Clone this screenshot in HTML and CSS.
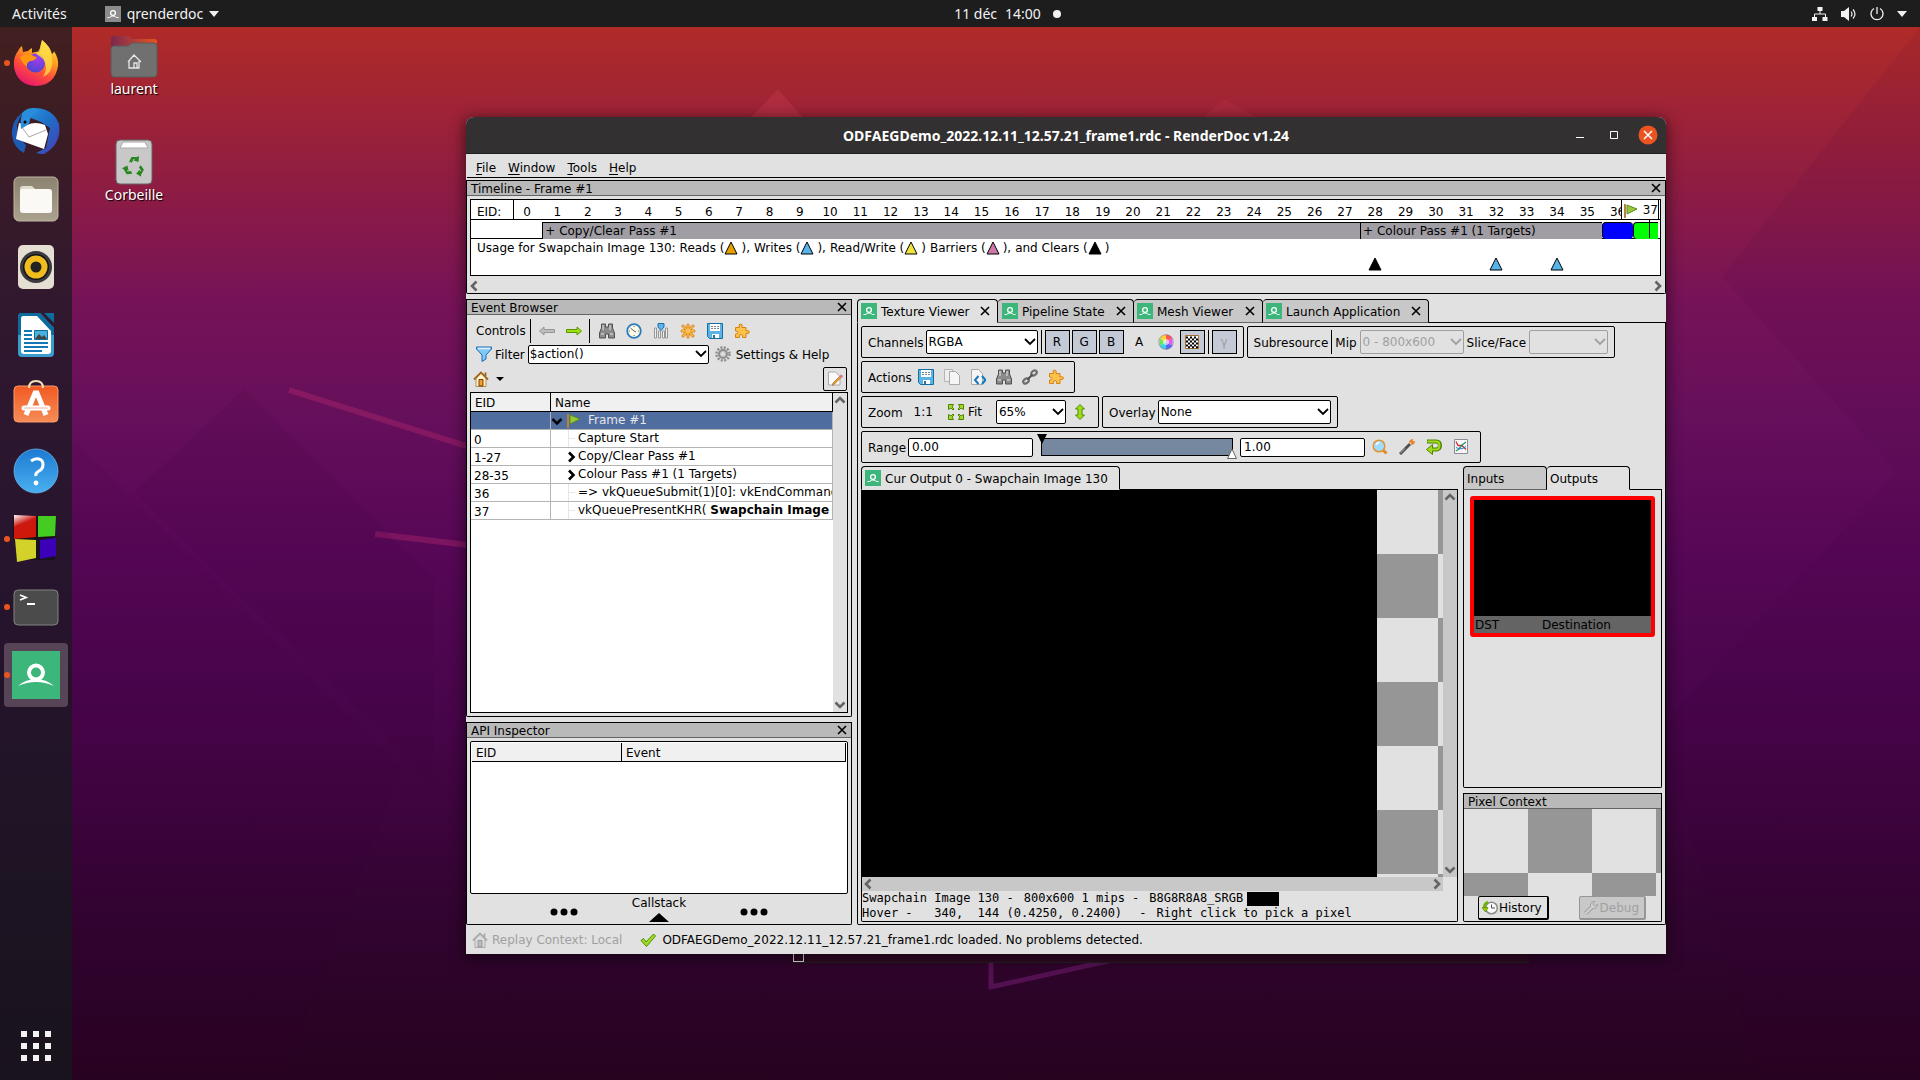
FILE: index.html
```html
<!DOCTYPE html>
<html lang="fr">
<head>
<meta charset="utf-8">
<title>qrenderdoc</title>
<link rel="stylesheet" href="styles.css">
</head>
<body>
<svg class="defs" aria-hidden="true">
  <defs>
    <linearGradient id="g-fire" x1="0.8" y1="0" x2="0.3" y2="1"><stop offset="0" stop-color="#fff44f"/><stop offset=".35" stop-color="#ffa01e"/><stop offset=".65" stop-color="#ff4f3a"/><stop offset="1" stop-color="#e6146e"/></linearGradient>
    <radialGradient id="g-globe" cx=".6" cy=".3" r=".8"><stop offset="0" stop-color="#a03cf0"/><stop offset="1" stop-color="#4646c8"/></radialGradient>
    <linearGradient id="g-bird" x1="0" y1="0" x2="1" y2="1"><stop offset="0" stop-color="#2a9be0"/><stop offset=".5" stop-color="#1e6ec8"/><stop offset="1" stop-color="#4a3ab4"/></linearGradient>
    <linearGradient id="g-blue" x1="0" y1="0" x2="0" y2="1"><stop offset="0" stop-color="#1c7ad2"/><stop offset="1" stop-color="#4ab0f0"/></linearGradient>
    <linearGradient id="g-orange" x1="0" y1="0" x2="0" y2="1"><stop offset="0" stop-color="#f25a22"/><stop offset="1" stop-color="#f58c58"/></linearGradient>
    <linearGradient id="g-tan" x1="0" y1="0" x2="0" y2="1"><stop offset="0" stop-color="#8c8270"/><stop offset="1" stop-color="#aaa28e"/></linearGradient>
    <linearGradient id="g-folder" x1="0" y1="0" x2="1" y2="0"><stop offset="0" stop-color="#7a2850"/><stop offset="1" stop-color="#e95420"/></linearGradient>
    <linearGradient id="g-red" x1="0" y1="0" x2=".4" y2="1"><stop offset="0" stop-color="#fff"/><stop offset=".45" stop-color="#cc1810"/><stop offset="1" stop-color="#d01808"/></linearGradient>
  </defs>
  <symbol id="rd" viewBox="0 0 48 48"><path fill="#3cb67a" d="M0 0h48v48H0z"/><circle cx="24" cy="21.500" r="7" fill="none" stroke="#fff" stroke-width="4"/><path fill="#fff" d="M6 35Q14 28 24 28t18 7Q33 31 24 31T6 35z"/></symbol>
  <symbol id="rd-small" viewBox="0 0 16 16"><path fill="#3cb67a" d="M0 0h16v16H0z"/><circle cx="8" cy="7" r="2.400" fill="none" stroke="#fff" stroke-width="1.300"/><path d="M2.500 11.500h2Q6 10 8 10t3.500 1.500h2" fill="none" stroke="#fff"/></symbol>
  <symbol id="flag" viewBox="0 0 16 16"><path d="M2 1v14" stroke="#b8823c" stroke-width="2"/><path d="M4 2l10 4-10 5z" fill="#9ac83c" stroke="#5a8c1e"/></symbol>
  <symbol id="close" viewBox="0 0 10 10"><path d="M1 1l8 8M9 1L1 9" stroke="#000" stroke-width="1.600"/></symbol>
  <symbol id="back" viewBox="0 0 16 16"><path d="M.500 8L5 4v2.500h10.500v3H5V12z" fill="#bebebe" stroke="#969696"/></symbol>
  <symbol id="forward" viewBox="0 0 16 16"><path d="M15.500 8L11 4v2.500H.500v3H11V12z" fill="#9ae010" stroke="#5a9600"/></symbol>
  <symbol id="binoculars" viewBox="0 0 16 16"><path d="M2.500 1h4v3h3V1h4v4l2 5v5H9.500v-4h-3v4H.500v-5l2-5z" fill="#8c8c8c" stroke="#505050"/><path d="M2 11h3M11 11h3M4 2v5M11 2v5" stroke="#e6e6e6"/></symbol>
  <symbol id="clock" viewBox="0 0 16 16"><circle cx="8" cy="8" r="6.800" fill="#fffbe6" stroke="#287cbe" stroke-width="1.800"/><path d="M8 8L4.500 5M8 3v1M8 12v1M3 8h1M12 8h1M8 8l2 1" stroke="#506478"/></symbol>
  <symbol id="bars" viewBox="0 0 16 16"><path d="M1.500 5v10h2V5zM5.500 8v7h2V8zM9.500 8v7h2V8zM12.500 5v10h2V5z" fill="#eee" stroke="#969696"/><path d="M5 .500h6V4L8 7.500 5 4z" fill="#5ab4f0" stroke="#1e6ea0"/></symbol>
  <symbol id="asterisk" viewBox="0 0 16 16"><g stroke-linecap="round"><path d="M8 2v12M2 8h12M3 3l10 10M13 3L3 13" stroke="#d88214" stroke-width="3"/><path d="M8 2v12M2 8h12M3 3l10 10M13 3L3 13" stroke="#ffc050" stroke-width="1.300"/></g></symbol>
  <symbol id="save" viewBox="0 0 16 16"><path d="M.500.500h15v15h-13l-2-2z" fill="#5ab4e6" stroke="#146ea0"/><path d="M3 1h10v7H3zM5 11h7v4H5z" fill="#fff"/><path d="M4 3.500h8M4 5.500h8" stroke="#82828c" stroke-dasharray="2 1"/><path d="M6 12h2v3H6z" fill="#3c6e96"/></symbol>
  <symbol id="puzzle" viewBox="0 0 16 16"><path d="M1.500 4.500h4Q4 1 6.500 1T8 4.500h4V8q3.500-1 3.500 1T12 10.500v4H8.500q1-3-1.500-3t-1.500 3h-4V11Q4 11 4 9.500T1.500 8z" fill="#fcc24a" stroke="#d88214"/></symbol>
  <symbol id="funnel" viewBox="0 0 16 16"><path d="M.500 1h15v2L10 9v4l-4 2.500V9L.500 3z" fill="#82c8f5" stroke="#1e6eb4"/><path d="M2 2.500h12" stroke="#dff2ff" stroke-width="1.500"/></symbol>
  <symbol id="gear" viewBox="0 0 16 16"><circle cx="8" cy="8" r="6.500" fill="none" stroke="#8c8c8c" stroke-width="2.500" stroke-dasharray="2 1.400"/><circle cx="8" cy="8" r="4" fill="#c8c8c8" stroke="#8c8c8c" stroke-width="2"/><circle cx="8" cy="8" r="1.800" fill="#e1e1e1"/></symbol>
  <symbol id="house" viewBox="0 0 16 16"><path d="M3 7l5-5 5 5v8.500H3z" fill="#fff4d2" stroke="#b48c50"/><path d="M1 8.500L8 1.500l7 7M12.500 5V1.500" fill="none" stroke="#a0641e" stroke-width="1.800"/><path d="M6 8.500h4v6.500H6z" fill="#f0a028" stroke="#783c0a"/></symbol>
  <symbol id="house-grey" viewBox="0 0 16 16"><path d="M3 7l5-5 5 5v8.500H3z" fill="#ddd" stroke="#aaa"/><path d="M1 8.500L8 1.500l7 7M12.500 5V1.500" fill="none" stroke="#aaa" stroke-width="1.800"/><path d="M6 8.500h4v6.500H6z" fill="#bbb" stroke="#999"/></symbol>
  <symbol id="edit" viewBox="0 0 16 16"><path d="M1.500 1h7L13 5.500V14H1.500z" fill="#fafafa" stroke="#aaa"/><path d="M14.500 6l-7 7-2 1.500.500-2.500 7-7z" fill="#f5a028" stroke="#96641e" stroke-width=".7"/><path d="M13 4.500l2.500 1.500" stroke="#d278a0" stroke-width="2.500"/></symbol>
  <symbol id="wheel" viewBox="0 0 16 16"><g transform="translate(8 8)"><path fill="#f55" d="M0 0V-7.500A7.500 7.500 0 0 1 6.500-3.750z"/><path fill="#e05af0" d="M0 0L6.500-3.750V3.750z"/><path fill="#5a64f5" d="M0 0L6.500 3.750A7.500 7.500 0 0 1 0 7.500z"/><path fill="#3cd2e6" d="M0 0V7.500A7.500 7.500 0 0 1-6.500 3.750z"/><path fill="#6ee650" d="M0 0L-6.500 3.750V-3.750z"/><path fill="#fad23c" d="M0 0L-6.500-3.750A7.500 7.500 0 0 1 0-7.500z"/><circle r="3" fill="#fff" opacity=".6"/><circle r="7.300" fill="none" stroke="#8c78a0" stroke-width=".6"/></g></symbol>
  <symbol id="checker" viewBox="0 0 16 16"><path d="M1.500 1.500h13v13h-13z" fill="#fff" stroke="#a06e32"/><path d="M2 3.500h12M2 7.500h12M2 11.500h12" stroke="#000" stroke-width="2" stroke-dasharray="2"/><path d="M4 5.500h10M4 9.500h10M4 13.200h10" stroke="#000" stroke-width="2" stroke-dasharray="2"/></symbol>
  <symbol id="copy" viewBox="0 0 16 16"><path d="M.500.500h8v12h-8z" fill="#eee" stroke="#b4b4b4"/><path d="M5.500 2.500h6l4 4v9h-10z" fill="#f5f5f5" stroke="#aaa"/></symbol>
  <symbol id="page-code" viewBox="0 0 16 16"><path d="M1.500.500h7l4 4v11h-11z" fill="#f5f5f5" stroke="#aaa"/><path d="M8.500 7L5 11l3.500 4M12 7l3.500 4-3.500 4" fill="none" stroke="#1478be" stroke-width="2"/></symbol>
  <symbol id="link" viewBox="0 0 16 16"><g fill="none" stroke="#6e6e6e" stroke-width="2.200"><ellipse cx="4" cy="12" rx="3" ry="2.200" transform="rotate(-40 4 12)"/><ellipse cx="12" cy="4" rx="3" ry="2.200" transform="rotate(-40 12 4)"/></g><path d="M5.500 10.500l5-5" stroke="#505050" stroke-width="2"/></symbol>
  <symbol id="fit" viewBox="0 0 16 16"><g fill="#a0dc28" stroke="#508200"><path d="M.500.500h5L4 3l2 2-1 1-2-2-2.500 1.500zM15.500.500h-5L12 3l-2 2 1 1 2-2 2.500 1.500zM.500 15.500h5L4 13l2-2-1-1-2 2-2.500-1.500zM15.500 15.500h-5L12 13l-2-2 1-1 2 2 2.500-1.500z"/></g></symbol>
  <symbol id="updown" viewBox="0 0 16 16"><path d="M8 .500L12.500 5H10v6h2.500L8 15.500 3.500 11H6V5H3.500z" fill="#a0dc1e" stroke="#508c00"/></symbol>
  <symbol id="magnifier" viewBox="0 0 16 16"><path d="M10.500 10.500l4 4" stroke="#e08c28" stroke-width="3"/><circle cx="7" cy="7" r="5.800" fill="#a0dcff" stroke="#e09632" stroke-width="1.500"/><path d="M4 6q1-2.500 3.500-2.500" stroke="#fff" stroke-width="1.500" fill="none"/></symbol>
  <symbol id="wand" viewBox="0 0 16 16"><path d="M1 15L11 5" stroke="#505050" stroke-width="3"/><path d="M1.500 14L6 9.500" stroke="#b4b4b4"/><path d="M13 0v6M10 3h6M11 1l4 4" stroke="#e6822d" stroke-width="1.500"/></symbol>
  <symbol id="undo" viewBox="0 0 16 16"><path d="M1 2.500h9.500Q14 3 14 6.500T10.500 10.500H4" fill="none" stroke="#508200" stroke-width="4"/><path d="M6.500 5.500v10L.500 10.500z" fill="#a0dc1e" stroke="#508200"/><path d="M1.500 2.500h9Q13.500 3 13.500 6.500T10.500 10.500H3" fill="none" stroke="#a0dc1e" stroke-width="2"/></symbol>
  <symbol id="graph" viewBox="0 0 16 16"><path d="M1.500.500h13v14h-13z" fill="#fff" stroke="#8c8c96"/><path d="M3 1v13M6 1v13M9 1v13M12 1v13" stroke="#dcdce6" stroke-width=".6"/><path d="M3 2.500l2 4h4l4 4" stroke="#c83232" fill="none" stroke-width="1.300"/><path d="M3 12l3-2 3-4 4-3" stroke="#28966e" fill="none" stroke-width="1.300"/><path d="M3 8.500q5 3 10-1" stroke="#2878c8" fill="none"/></symbol>
  <symbol id="history" viewBox="0 0 16 16"><circle cx="9.500" cy="8" r="5.800" fill="#fafafa" stroke="#8c8c8c" stroke-width="1.500"/><path d="M9.500 4.500V8H13" stroke="#505050" fill="none"/><path d="M6 2Q1.500 4 2.500 8" stroke="#6eb400" stroke-width="2.500" fill="none"/><path d="M0 7.500h6L3.500 12z" fill="#96d200" stroke="#508200" stroke-width=".7"/></symbol>
  <symbol id="wrench" viewBox="0 0 16 16"><path d="M2.500 13.500l7-7" stroke="#a0a0a0" stroke-width="4"/><path d="M14.500 4L12 6.500 9.500 4 12 1.500Q8 1 7.500 5T11 8.500t3.500-4.500z" fill="#d2d2d2" stroke="#a0a0a0"/><path d="M2.500 13.500l6-6" stroke="#d2d2d2" stroke-width="2"/></symbol>
  <symbol id="tick" viewBox="0 0 16 16"><path d="M1 8.500L3.500 6.500 6 10 13.500 2l2 2L6.500 14.500z" fill="#a0dc1e" stroke="#508c00"/></symbol>
  <symbol id="tri" viewBox="0 0 14 14"><path d="M7 1L13 13H1z"/></symbol>
  <symbol id="chev" viewBox="0 0 12 8"><path d="M1.500 6.500L6 2l4.500 4.500" fill="none" stroke="#646464" stroke-width="2.600"/></symbol>
  <symbol id="tree-open" viewBox="0 0 12 12"><path d="M1.500 4L6 8.500 10.500 4" fill="none" stroke="#000" stroke-width="2.600"/></symbol>
  <symbol id="tree-closed" viewBox="0 0 12 12"><path d="M4 1.500L8.500 6 4 10.500" fill="none" stroke="#000" stroke-width="2.600"/></symbol>
  <symbol id="dots" viewBox="0 0 28 8"><circle cx="4" cy="4" r="3.500"/><circle cx="14" cy="4" r="3.500"/><circle cx="24" cy="4" r="3.500"/></symbol>
</svg>

<header class="topbar">
  <div class="top-left">
    <button class="bare">Activités</button>
    <button class="bare app-menu">
      <svg width="16" height="16" viewBox="0 0 16 16"><path fill="#8c8c8c" d="M0 0h16v16H0z"/><circle cx="8" cy="7" r="2.400" fill="none" stroke="#fff" stroke-width="1.300"/><path d="M2.500 11.500h2Q6 10 8 10t3.500 1.500h2" fill="none" stroke="#fff"/></svg>
      <span>qrenderdoc</span>
      <svg width="10" height="6"><path d="M0 0h10L5 6z" fill="#f2f2f2"/></svg>
    </button>
  </div>
  <button class="bare clock"><span>11 déc</span><span>14:00</span><svg width="8" height="8"><circle cx="4" cy="4" r="4" fill="#f2f2f2"/></svg></button>
  <div class="tray">
    <svg width="16" height="14" viewBox="0 0 16 14"><path fill="#f2f2f2" d="M5.500 0h5v4h-5zM0 10h5v4H0zM10.500 10h5v4h-5z"/><path d="M8 4v3M2.500 10V7h11v3" fill="none" stroke="#f2f2f2"/></svg>
    <svg width="16" height="14" viewBox="0 0 16 14"><path fill="#f2f2f2" d="M0 4h3l5-4v14l-5-4H0z"/><path d="M10 4.500q2 2.500 0 5M12 2.500q4 4.500 0 9" fill="none" stroke="#f2f2f2" stroke-width="1.200"/></svg>
    <svg width="14" height="14" viewBox="0 0 14 14"><path d="M4 1.500a6 6 0 1 0 6 0M7 0v7" fill="none" stroke="#f2f2f2" stroke-width="1.300"/></svg>
    <svg width="10" height="6"><path d="M0 0h10L5 6z" fill="#f2f2f2"/></svg>
  </div>
</header>

<div class="desktop">
  <nav class="dock">
    <button class="launcher running" aria-label="Firefox"><svg width="48" height="48" viewBox="0 0 48 48"><path fill="url(#g-fire)" d="M30 1q8 6 10 14 2-1 2-3 5 8 4 15-3 19-22 20Q5 46 2 28 1 18 6 12q1-3 4-5l1 6 5-1q2-2 4-3v5q4-2 8-1 0-7 2-12z"/><circle cx="23.500" cy="24" r="9.500" fill="url(#g-globe)"/><path fill="#ff980e" d="M8 18q6-4 12-2 2 2 5 2-2 4-7 4-4 2-3 6-5-4-7-10z"/><path fill="#ffe04a" d="M30 1q9 8 10 18 2 14-9 19 6-10 0-18-5-4-7-5 5-5 6-14z" opacity=".75"/></svg></button>
    <button class="launcher" aria-label="Thunderbird"><svg width="48" height="48" viewBox="0 0 48 48"><path fill="url(#g-bird)" d="M9 7Q15 0 22 1q19 0 25 16 3 20-15 30-5 0-8-1l10-5 4-20-9-6z"/><path fill="#1e5ab4" d="M10 6Q-1 14 0 28q1 12 12 18l2-8-8-8-1-12z"/><path fill="#fff" d="M7 16l8 2q8-4 18 0l3 9-4 15L4 32z"/><path d="M9 19l8 11 17-7" fill="none" stroke="#aaa"/><path fill="#2a8cdc" d="M10 7q8-6 18-4-10 4-11 14l-8 5q-1-9 1-15z"/><circle cx="13" cy="15" r="1.500"/></svg></button>
    <button class="launcher" aria-label="Fichiers"><svg width="48" height="48" viewBox="0 0 48 48"><rect x="2" y="2" width="44" height="44" rx="5" fill="url(#g-tan)" stroke="#beb6a2"/><path fill="#e0dccc" d="M8 14q0-3 3-3h9l3 3v6H8z"/><rect x="8" y="14" width="32" height="24" rx="3" fill="#faf9f6"/></svg></button>
    <button class="launcher" aria-label="Rhythmbox"><svg width="48" height="48" viewBox="0 0 48 48"><rect x="6" y="2" width="36" height="44" rx="5" fill="#e4dfd2"/><circle cx="24" cy="24" r="16" fill="#3a3a3e"/><circle cx="24" cy="24" r="13" fill="#11131c"/><circle cx="24" cy="24" r="11.500" fill="#f0bc1e"/><circle cx="24" cy="24" r="5.500" fill="#222"/></svg></button>
    <button class="launcher" aria-label="LibreOffice Writer"><svg width="48" height="48" viewBox="0 0 48 48"><path fill="#3a9ccc" d="M10 2h18l14 15v25q0 4-4 4H10q-4 0-4-4V6q0-4 4-4z"/><path fill="#0e6c9c" d="M10 2h18l14 15v7H6V6q0-4 4-4zM32 2h10v10z"/><path fill="#fff" d="M11 5h14l14 15v20q0 3-3 3H12q-3 0-3-3V8q0-3 2-3z"/><path d="M12 20h8M12 24h8M12 28h8M12 32h24M12 36h24M12 40h18" stroke="#1478b4" stroke-width="2"/><path fill="#4ab0dc" stroke="#0e6c9c" d="M22.500 19.500h13v9h-13z"/><path fill="#444" d="M23 28l4-5 3 3 2-2 3 4z"/></svg></button>
    <button class="launcher" aria-label="Ubuntu Software"><svg width="48" height="48" viewBox="0 0 48 48"><rect x="2" y="7" width="44" height="36" rx="4" fill="url(#g-orange)" stroke="#fa9a6a"/><path d="M17 9q0-7 7-7t7 7" fill="none" stroke="#f5deb4" stroke-width="2"/><path d="M14 36l9-22h2l9 22" fill="none" stroke="#fff" stroke-width="5"/><path d="M12 29h24" stroke="#fff" stroke-width="5" stroke-linecap="round"/><path d="M12 29h24" stroke="#f0b4aa"/></svg></button>
    <button class="launcher" aria-label="Aide"><svg width="48" height="48" viewBox="0 0 48 48"><circle cx="24" cy="24" r="22" fill="url(#g-blue)" stroke="#6ec0f5" stroke-width=".7"/><path d="M19 14q4-3 8-2t4 5.500-4 6.500-3 5" fill="none" stroke="#fff" stroke-width="3"/><circle cx="24" cy="36" r="2.400" fill="#fff"/></svg></button>
    <button class="launcher running" aria-label="Code::Blocks"><svg width="48" height="48" viewBox="0 0 48 48"><path d="M1 1h42v44H4V26L1 22z" fill="#141018" opacity=".8"/><path fill="url(#g-red)" d="M2 0l22 1v21L2 24z"/><path fill="#44cc22" d="M26 1h18l-1 20-17 1z"/><path fill="#d2d22a" d="M3 24l21 1v18L5 47z"/><path fill="#3c00b8" d="M28 25l16-2v18l-16 3z"/></svg></button>
    <button class="launcher running" aria-label="Terminal"><svg width="48" height="48" viewBox="0 0 48 48"><rect x="2" y="7" width="44" height="35" rx="4" fill="#4b4b4b" stroke="#828282"/><path d="M8 12l6 2.500L8 17M15 21h8" fill="none" stroke="#fff" stroke-width="1.800"/></svg></button>
    <button class="launcher running active" aria-label="RenderDoc"><svg width="48" height="48"><use href="#rd"/></svg></button>
    <button class="launcher apps" aria-label="Afficher les applications"><svg width="32" height="32" viewBox="0 0 32 32" fill="#f2f2f2"><path d="M1 1h6v6H1zM13 1h6v6h-6zM25 1h6v6h-6zM1 13h6v6H1zM13 13h6v6h-6zM25 13h6v6h-6zM1 25h6v6H1zM13 25h6v6h-6zM25 25h6v6h-6z"/></svg></button>
  </nav>

  <main class="canvas">
    <svg class="wallpaper" viewBox="0 0 1848 1053" preserveAspectRatio="none" aria-hidden="true">
      <path fill="#c83c50" opacity=".35" d="M706 62l26 30h-55z"/><path fill="#c83c50" opacity=".2" d="M1152 72l-70 62h180z"/>
      <path d="M217 363l190 60M303 507l110 13" stroke="#b4286e" stroke-width="6" opacity=".4"/>
      <path fill="#3c003c" opacity=".1" d="M172 362L62 466l300 290V553z"/><path fill="#3c003c" opacity=".07" d="M0 410l330 330-120 313H0zM1848 420l-260 280 100 353h160zM1650 250l198 220V0z"/>
      <path d="M919 930v30l180-40" stroke="#781e78" stroke-width="5" fill="none" opacity=".5"/>
    </svg>
    <div class="shortcuts">
      <a class="shortcut" href="#laurent"><svg width="48" height="44" viewBox="0 0 48 44"><path fill="url(#g-folder)" d="M1 4q0-3 3-3h14l4 3h22q3 0 3 3v12H1z"/><path fill="#707070" stroke="#5a5a5a" d="M1 14q0-3 3-3h14l4-3h22q3 0 3 3v27q0 4-3 4H4q-3 0-3-4z"/><path d="M18 27l6-7 7 7M19 26v7h10v-7M24 33v-5h3v5" fill="none" stroke="#e6e6e6" stroke-width="1.300"/></svg><span>laurent</span></a>
      <a class="shortcut" href="#corbeille"><svg width="40" height="46" viewBox="0 1 40 46"><rect x="2" y="2" width="36" height="44" rx="4" fill="#c8c8c8" stroke="#646464"/><path fill="#fff" stroke="#aaa" d="M6 10l3-6h22l3 6z"/><g fill="#28871e"><path id="arrow" d="M15 24l2.500-5h5.500l2-1-.5 6-5-1.500 1.500-1-1.500-.5-1.500 3.500z"/><use href="#arrow" transform="rotate(120 20 29)"/><use href="#arrow" transform="rotate(240 20 29)"/></g></svg><span>Corbeille</span></a>
    </div>
    <div class="behind"><i></i></div>

    <section class="window">
      <header class="titlebar"><h1>ODFAEGDemo_2022.12.11_12.57.21_frame1.rdc - RenderDoc v1.24</h1>
        <div class="win-buttons">
          <button class="bare" aria-label="Réduire"><svg width="8" height="8"><path d="M0 6.500h8" stroke="#fff"/></svg></button>
          <button class="bare" aria-label="Agrandir"><svg width="8" height="8"><path d="M.500.500h7v7h-7z" fill="none" stroke="#fff"/></svg></button>
          <button class="bare" aria-label="Fermer"><svg width="20" height="20"><circle cx="10" cy="10" r="9.500" fill="#e95420"/><path d="M6 6l8 8M14 6l-8 8" stroke="#fff" stroke-width="1.500"/></svg></button>
        </div>
      </header>
      <nav class="menubar"><button class="bare"><u>F</u>ile</button><button class="bare"><u>W</u>indow</button><button class="bare"><u>T</u>ools</button><button class="bare"><u>H</u>elp</button></nav>

      <section class="panel timeline">
        <header class="panel-title"><h2>Timeline - Frame #1</h2><button class="bare" aria-label="Fermer"><svg width="10" height="10"><use href="#close"/></svg></button></header>
        <div class="track-box">
          <div class="track ruler"><span class="track-label">EID:</span>
            <div class="eids"><span>0</span><span>1</span><span>2</span><span>3</span><span>4</span><span>5</span><span>6</span><span>7</span><span>8</span><span>9</span><span>10</span><span>11</span><span>12</span><span>13</span><span>14</span><span>15</span><span>16</span><span>17</span><span>18</span><span>19</span><span>20</span><span>21</span><span>22</span><span>23</span><span>24</span><span>25</span><span>26</span><span>27</span><span>28</span><span>29</span><span>30</span><span>31</span><span>32</span><span>33</span><span>34</span><span>35</span><span>36</span></div>
            <div class="current"><svg width="16" height="16"><use href="#flag"/></svg><span>37</span></div>
          </div>
          <div class="track passes"><span class="track-label"></span>
            <div class="eids"><span class="pass copy">+ Copy/Clear Pass #1</span><span class="pass colour">+ Colour Pass #1 (1 Targets)</span><span class="pass submit"></span><span class="pass present"></span></div>
            <i class="cursor"></i>
          </div>
          <p class="usage">Usage for Swapchain Image 130: <span>Reads (<svg class="reads" width="14" height="14"><use href="#tri"/></svg>),</span> <span>Writes (<svg class="writes" width="14" height="14"><use href="#tri"/></svg>),</span> <span>Read/Write (<svg class="rw" width="14" height="14"><use href="#tri"/></svg>)</span> <span>Barriers (<svg class="barriers" width="14" height="14"><use href="#tri"/></svg>),</span> <span>and Clears (<svg class="clears" width="14" height="14"><use href="#tri"/></svg>)</span></p>
          <div class="track marks"><span class="track-label"></span>
            <div class="eids"><svg class="clears at28" width="14" height="14"><use href="#tri"/></svg><svg class="writes at32" width="14" height="14"><use href="#tri"/></svg><svg class="writes at34" width="14" height="14"><use href="#tri"/></svg></div>
          </div>
        </div>
        <div class="hscroll"><svg class="left" width="12" height="8"><use href="#chev"/></svg><svg class="right" width="12" height="8"><use href="#chev"/></svg></div>
      </section>

      <div class="work">
        <div class="side">
          <section class="panel events">
            <header class="panel-title"><h2>Event Browser</h2><button class="bare" aria-label="Fermer"><svg width="10" height="10"><use href="#close"/></svg></button></header>
            <div class="controls"><span class="name">Controls</span><i class="sep"></i>
              <div class="steps"><button class="bare" aria-label="Précédent"><svg width="16" height="16"><use href="#back"/></svg></button><button class="bare" aria-label="Suivant"><svg width="16" height="16"><use href="#forward"/></svg></button></div><i class="sep"></i>
              <button class="bare" aria-label="Chercher"><svg width="16" height="16"><use href="#binoculars"/></svg></button><button class="bare" aria-label="Durées"><svg width="16" height="16"><use href="#clock"/></svg></button><button class="bare" aria-label="Colonnes"><svg width="16" height="16"><use href="#bars"/></svg></button><button class="bare" aria-label="Signet"><svg width="16" height="16"><use href="#asterisk"/></svg></button><button class="bare" aria-label="Exporter"><svg width="16" height="16"><use href="#save"/></svg></button><button class="bare" aria-label="Extensions"><svg width="16" height="16"><use href="#puzzle"/></svg></button>
            </div>
            <div class="filter"><svg width="16" height="16"><use href="#funnel"/></svg><label for="filter">Filter</label><select id="filter"><option>$action()</option></select><button class="bare settings"><svg width="16" height="16"><use href="#gear"/></svg><span>Settings &amp; Help</span></button></div>
            <div class="bookmarks"><button class="bare home" aria-label="Accueil"><svg width="16" height="16"><use href="#house"/></svg><svg width="8" height="4"><path d="M0 0h8L4 4z"/></svg></button><button class="edit" aria-label="Modifier"><svg width="16" height="16"><use href="#edit"/></svg></button></div>
            <div class="list">
              <div class="list-view"><table>
                <thead><tr><th class="eid">EID</th><th>Name</th></tr></thead>
                <tbody>
                  <tr class="selected"><td></td><td><div class="node root"><svg width="12" height="12"><use href="#tree-open"/></svg><svg width="16" height="16"><use href="#flag"/></svg><span>Frame #1</span></div></td></tr>
                  <tr><td>0</td><td><div class="node"><i></i>Capture Start</div></td></tr>
                  <tr><td>1-27</td><td><div class="node"><svg width="12" height="12"><use href="#tree-closed"/></svg>Copy/Clear Pass #1</div></td></tr>
                  <tr><td>28-35</td><td><div class="node"><svg width="12" height="12"><use href="#tree-closed"/></svg>Colour Pass #1 (1 Targets)</div></td></tr>
                  <tr><td>36</td><td><div class="node"><i></i>=&gt; vkQueueSubmit(1)[0]: vkEndCommandBuffer</div></td></tr>
                  <tr><td>37</td><td><div class="node"><i class="last"></i>vkQueuePresentKHR(&nbsp;<b>Swapchain Image</b></div></td></tr>
                </tbody>
              </table></div>
              <div class="vscroll"><svg width="12" height="8"><use href="#chev"/></svg><svg class="down" width="12" height="8"><use href="#chev"/></svg></div>
            </div>
          </section>
          <section class="panel api">
            <header class="panel-title"><h2>API Inspector</h2><button class="bare" aria-label="Fermer"><svg width="10" height="10"><use href="#close"/></svg></button></header>
            <div class="api-list"><table><thead><tr><th class="api-eid">EID</th><th>Event</th></tr></thead></table></div>
            <button class="bare callstack"><svg width="28" height="8"><use href="#dots"/></svg><span class="cs-mid">Callstack<svg width="20" height="9"><path d="M10 0L20 9H0z"/></svg></span><svg width="28" height="8"><use href="#dots"/></svg></button>
          </section>
        </div>

        <div class="viewer">
          <div class="tabs">
            <span class="tab on t1"><svg width="16" height="16"><use href="#rd-small"/></svg><span>Texture Viewer</span><svg width="10" height="10"><use href="#close"/></svg></span>
            <span class="tab t2"><svg width="16" height="16"><use href="#rd-small"/></svg><span>Pipeline State</span><svg width="10" height="10"><use href="#close"/></svg></span>
            <span class="tab t3"><svg width="16" height="16"><use href="#rd-small"/></svg><span>Mesh Viewer</span><svg width="10" height="10"><use href="#close"/></svg></span>
            <span class="tab t4"><svg width="16" height="16"><use href="#rd-small"/></svg><span>Launch Application</span><svg width="10" height="10"><use href="#close"/></svg></span>
            <span class="tab-rest"></span>
          </div>
          <div class="viewer-body">
            <div class="bars">
              <div class="bar-row">
                <div class="bar"><label for="channels">Channels</label><select id="channels" class="w-channels"><option>RGBA</option></select><i class="sep"></i>
                  <div class="toggles"><button class="toggle">R</button><button class="toggle">G</button><button class="toggle">B</button><button class="bare letter">A</button><button class="bare wheel" aria-label="Couleur"><svg width="16" height="16"><use href="#wheel"/></svg></button><button class="toggle" aria-label="Damier"><svg width="16" height="16"><use href="#checker"/></svg></button></div><i class="sep"></i><button class="toggle dim" disabled>γ</button></div>
                <div class="bar sub"><span>Subresource</span><i class="sep"></i><label for="mip">Mip</label><select id="mip" class="w-mip" disabled><option>0 - 800x600</option></select><label for="slice">Slice/Face</label><select id="slice" class="w-slice" disabled><option></option></select></div>
              </div>
              <div class="bar-row"><div class="bar actions"><span>Actions</span><button class="bare" aria-label="Enregistrer"><svg width="16" height="16"><use href="#save"/></svg></button><button class="bare" aria-label="Copier"><svg width="16" height="16"><use href="#copy"/></svg></button><button class="bare" aria-label="Shader"><svg width="16" height="16"><use href="#page-code"/></svg></button><button class="bare" aria-label="Chercher"><svg width="16" height="16"><use href="#binoculars"/></svg></button><button class="bare" aria-label="Lien"><svg width="16" height="16"><use href="#link"/></svg></button><button class="bare" aria-label="Extensions"><svg width="16" height="16"><use href="#puzzle"/></svg></button></div></div>
              <div class="bar-row">
                <div class="bar zoom"><label for="zoom">Zoom</label><button class="bare">1:1</button><button class="bare fit"><svg width="16" height="16"><use href="#fit"/></svg>Fit</button><select id="zoom" class="w-zoom"><option>65%</option></select><button class="bare" aria-label="Retourner"><svg width="16" height="16"><use href="#updown"/></svg></button></div>
                <div class="bar"><label for="overlay">Overlay</label><select id="overlay" class="w-overlay"><option>None</option></select></div>
              </div>
              <div class="bar-row"><div class="bar range"><label for="rmin">Range</label><input id="rmin" type="text" value="0.00"><div class="slider"><svg class="low" width="10" height="10"><path d="M0 0h10L5 10z"/></svg><svg class="high" width="10" height="11"><path d="M5 1l4.500 9.500h-9z" fill="#fff" stroke="#646464"/></svg></div><input type="text" value="1.00" aria-label="Maximum"><div class="range-tools"><button class="bare" aria-label="Zoom"><svg width="16" height="16"><use href="#magnifier"/></svg></button><button class="bare" aria-label="Ajuster"><svg width="16" height="16"><use href="#wand"/></svg></button><button class="bare" aria-label="Rétablir"><svg width="16" height="16"><use href="#undo"/></svg></button><button class="bare" aria-label="Histogramme"><svg width="16" height="16"><use href="#graph"/></svg></button></div></div></div>
            </div>
            <div class="output">
              <div class="texture">
                <div class="tabs"><span class="tab on cur"><svg width="16" height="16"><use href="#rd-small"/></svg><span>Cur Output 0 - Swapchain Image 130</span></span><span class="tab-rest"></span></div>
                <div class="texture-body">
                  <div class="texture-grid">
                    <div class="checkers"><div class="image"></div></div>
                    <div class="vscroll grey"><svg width="12" height="8"><use href="#chev"/></svg><svg class="down" width="12" height="8"><use href="#chev"/></svg></div>
                    <div class="hscroll grey"><svg class="left" width="12" height="8"><use href="#chev"/></svg><svg class="right" width="12" height="8"><use href="#chev"/></svg></div>
                  </div>
                  <div class="info"><pre>Swapchain Image 130 -</pre><pre>800x600 1 mips -</pre><pre>B8G8R8A8_SRGB</pre><i class="swatch"></i></div>
                  <div class="info"><pre>Hover -   340,  144 (0.4250, 0.2400)</pre><pre> -</pre><pre>Right click to pick a pixel</pre></div>
                </div>
              </div>
              <div class="right-col">
                <div class="tabs"><span class="tab io">Inputs</span><span class="tab on io">Outputs</span><span class="tab-rest"></span></div>
                <div class="thumbs"><figure class="thumb"><div class="thumb-img"></div><figcaption><span>DST</span><span>Destination</span></figcaption></figure></div>
                <section class="pixel">
                  <header class="panel-title"><h2>Pixel Context</h2></header>
                  <div class="pixel-checkers"></div>
                  <div class="pixel-buttons"><button class="push"><svg width="16" height="16"><use href="#history"/></svg>History</button><button class="push" disabled><svg width="16" height="16"><use href="#wrench"/></svg>Debug</button></div>
                </section>
              </div>
            </div>
          </div>
        </div>
      </div>
      <footer class="status"><span class="context"><svg width="16" height="16"><use href="#house-grey"/></svg>Replay Context: Local</span><span class="loaded"><svg width="16" height="16"><use href="#tick"/></svg>ODFAEGDemo_2022.12.11_12.57.21_frame1.rdc loaded. No problems detected.</span></footer>
    </section>
  </main>
</div>
</body>
</html>
```
FILE: styles.css
```css
* { box-sizing: border-box; }
body { margin: 0; height: 100vh; display: flex; flex-direction: column; overflow: hidden; font: 12px/14px "DejaVu Sans", sans-serif; color: #000; background: #2a0320; }
svg { display: block; flex: none; }
.defs { position: absolute; width: 0; height: 0; }
button, select, input { font: inherit; color: inherit; margin: 0; }
.bare { border: 0; padding: 0; background: none; display: flex; align-items: center; }
h1, h2, p, pre, figure { margin: 0; font-size: inherit; font-weight: inherit; }

.topbar { height: 27px; flex: none; display: grid; grid-template-columns: 1fr auto 1fr; align-items: center; padding: 0 13px 0 12px; background: #1d1d1d; color: #f2f2f2; font: 14px/18px "Noto Sans", "Open Sans", sans-serif; }
.top-left { display: flex; gap: 38px; }
.app-menu { gap: 6px; }
.clock { gap: 8px; margin-left: 96px; }
.clock svg { margin-left: 4px; }
.tray { display: flex; align-items: center; justify-content: flex-end; gap: 13px; }

.desktop { flex: 1; display: flex; min-height: 0; background: linear-gradient(#b02b28 0%, #951f3d 12%, #761358 26%, #660f5b 37%, #560756 50%, #470549 66%, #31042f 85%, #270320 100%); }
.dock { width: 72px; flex: none; display: flex; flex-direction: column; align-items: center; gap: 4px; padding: 4px 4px 2px; background: rgba(20, 27, 29, .7); }
.launcher { position: relative; width: 64px; height: 64px; border: 0; padding: 0; border-radius: 4px; background: none; display: grid; place-items: center; }
.launcher.active { background: #574457; }
.running::before { content: ""; position: absolute; left: 0; top: 29px; width: 6px; height: 6px; border-radius: 3px; background: #e95420; }
.apps { margin-top: auto; }
.canvas { position: relative; flex: 1; }
.wallpaper { position: absolute; inset: 0; width: 100%; height: 100%; }
.shortcuts { position: absolute; left: 22px; top: 8px; width: 80px; display: flex; flex-direction: column; gap: 41px; }
.shortcut { display: flex; flex-direction: column; align-items: center; gap: 1px; color: #fff; text-decoration: none; font: 14px/18px "Noto Sans", "Open Sans", sans-serif; text-shadow: 1px 1px 1px #000; }
.behind { position: absolute; left: 721px; top: 900px; width: 736px; height: 36px; background: #300a24; border-bottom: 1px solid #222; }
.behind i { position: absolute; left: 0; bottom: 0; width: 11px; height: 12px; border: 1px solid #ddd; }

.window { position: absolute; left: 394px; top: 90px; width: 62.5vw; display: flex; flex-direction: column; border-radius: 8px 8px 0 0; background: #e1e1e1; box-shadow: 0 3px 14px 2px rgba(0, 0, 0, .5); }
.titlebar { height: 37px; display: grid; grid-template-columns: 1fr auto 1fr; align-items: center; padding: 0 8px; border-radius: 8px 8px 0 0; background: #323030; border-bottom: 1px solid #1e1e1e; color: #fff; }
.titlebar h1 { grid-column: 2; padding-top: 2px; font: bold 14px/18px "Noto Sans", "Open Sans", sans-serif; }
.win-buttons { display: flex; gap: 24px; justify-content: flex-end; align-items: center; }
.win-buttons button + button { margin-left: 2px; }
.win-buttons button:last-child { margin-left: -4px; }
.menubar { height: 24px; display: flex; gap: 12px; padding: 4px 9px 0; border-bottom: 1px solid #000; margin: 0 1px 2px; }
.menubar .bare { display: block; }
.menubar u { text-underline-offset: 2px; }

.panel { border: 1px solid #000; border-top: 0; border-radius: 0 0 2px 2px; }
.panel-title { height: 16px; flex: none; display: flex; align-items: center; justify-content: space-between; padding: 0 4px; background: #b9b9b9; border-top: 1px solid #000; border-bottom: 1px solid #646464; }
.panel-title h2 { line-height: 16px; height: 14px; }
.timeline { height: 114px; }
.track-box { height: 77px; margin: 3px 4px 0 3px; border: 1px solid #000; background: #fff; overflow: hidden; }
.track { position: relative; display: flex; }
.track-label { width: 43px; flex: none; padding-left: 6px; }
.eids { flex: 1; display: grid; grid-template-columns: repeat(38, 1fr); margin: 0 -3px 0 -2px; text-align: center; }
.ruler { height: 20px; line-height: 24px; border-bottom: 1px solid #000; }
.ruler .track-label { border-right: 1px solid #000; }
.current { position: absolute; right: 1px; top: 0; width: 38px; height: 19px; padding-left: 1px; display: flex; align-items: center; justify-content: space-between; border: solid #000; border-width: 0 1px; background: #fff; }
.current svg { margin-top: 3px; }
.passes { height: 19px; padding-top: 2px; border-bottom: 1px solid #000; }
.pass { height: 17px; border: solid #000; border-width: 1px 0 0 1px; background: #a09ea4; text-align: left; padding-left: 2px; line-height: 17px; white-space: nowrap; }
.copy { grid-column: 2 / 29; }
.colour { grid-column: 29 / 37; }
.submit { grid-column: 37; background: #00f; border-radius: 4px; }
.present { grid-column: 38; background: #0f0; margin-right: 5px; border-radius: 4px 0 0 4px; }
.cursor { position: absolute; right: 10px; top: 0; width: 1px; height: 18px; background: #000; }
.usage { height: 18px; display: flex; align-items: center; gap: 4px; padding-left: 6px; }
.usage span { display: flex; align-items: center; white-space: pre; }
.usage span svg { margin-right: 3px; }
.usage svg, .marks svg { stroke: #000; stroke-width: 1; }
.marks svg { justify-self: center; grid-row: 1; }
.at28 { grid-column: 29; } .at32 { grid-column: 33; } .at34 { grid-column: 35; }
.reads { fill: #e69f00; } .writes { fill: #56b4e9; } .rw { fill: #f0e442; } .barriers { fill: #cc79a7; } .clears { fill: #000; }
.hscroll { height: 17px; display: flex; justify-content: space-between; align-items: center; padding: 2px 1px 0; }
.left { transform: rotate(-90deg); }
.right { transform: rotate(90deg); }

.work { display: flex; gap: 5px; margin-top: 5px; height: 626px; }
.side { width: 386px; flex: none; display: flex; flex-direction: column; gap: 5px; }
.events { flex: 1; display: flex; flex-direction: column; padding-bottom: 3px; }
.sep { width: 1px; height: 24px; background: #000; }
.controls { height: 29px; padding: 2px 0 0 9px; display: flex; align-items: center; gap: 8px; }
.controls .name { margin-right: -4px; }
.controls button { width: 19px; justify-content: center; }
.steps { display: flex; gap: 8px; margin: 0 -3px 0 -1px; }
.filter { height: 20px; display: flex; align-items: center; gap: 3px; padding-left: 9px; }
.filter label, .settings span { padding-top: 1px; }
.settings { gap: 5px; margin-left: 3px; }
.bookmarks { height: 28px; display: flex; align-items: center; justify-content: space-between; padding: 2px 4px 0 6px; }
.home { gap: 7px; }
.edit { width: 24px; height: 24px; padding: 0; display: grid; place-items: center; border: 1px solid #000; border-radius: 2px; background: #e1e1e1; }
select { appearance: none; height: 24px; padding: 0 20px 1px 2px; border: 1px solid #000; border-radius: 2px; background: #fff url("data:image/svg+xml,%3Csvg xmlns='http://www.w3.org/2000/svg' width='12' height='8'%3E%3Cpath d='M1 1l5 5 5-5' fill='none' stroke='%23000' stroke-width='1.800'/%3E%3C/svg%3E") no-repeat right 1px center; }
select:disabled { opacity: 1; color: #a0a0a0; border-color: #a0a0a0; background-color: #e1e1e1; background-image: url("data:image/svg+xml,%3Csvg xmlns='http://www.w3.org/2000/svg' width='12' height='8'%3E%3Cpath d='M1 1l5 5 5-5' fill='none' stroke='%23a0a0a0' stroke-width='1.800'/%3E%3C/svg%3E"); }
#filter { width: 181px; height: 19px; padding: 0 20px 0 1px; }
.list { flex: 1; display: flex; margin: 0 3px; border: 1px solid #000; background: #fff; }
.list-view { flex: 1; min-width: 0; }
table { width: 100%; table-layout: fixed; border-spacing: 0; }
th { height: 19px; padding: 2px 4px 0; text-align: left; font-weight: normal; background: #f0f0f0; border: solid #000; border-width: 0 1px 1px 0; }
.eid { width: 80px; }
td { height: 18px; padding: 2px 3px 0; border: solid #b4b4b4; border-width: 0 1px 1px 0; }
td + td { padding: 0; }
.node { display: flex; align-items: center; height: 17px; line-height: 19px; padding-left: 14px; overflow: hidden; white-space: nowrap; }
.node > svg { margin-right: 1px; }
.node i { width: 7px; height: 17px; margin: 0 3px; flex: none; border-left: 1px solid #e6e6e6; background: linear-gradient(#e6e6e6, #e6e6e6) 0 8px / 6px 1px no-repeat; }
.node.root { padding-left: 0; gap: 2px; }
.node.root span { margin-left: 3px; }
.selected td { background: #4f6d9f; color: #e6e6e6; }
.vscroll { width: 14px; display: flex; flex-direction: column; justify-content: space-between; align-items: center; padding: 3px 0; background: #e1e1e1; }
.down { transform: rotate(180deg); }

.api { height: 203px; display: flex; flex-direction: column; }
.api-list { flex: 1; margin: 3px 3px 0; padding: 1px; border: 1px solid #000; border-radius: 2px; background: #fff; }
.api-eid { width: 150px; }
.callstack { height: 30px; justify-content: center; gap: 54px; }
.callstack > svg { margin-top: 5px; }
.cs-mid { display: flex; flex-direction: column; align-items: center; gap: 3px; }

.viewer { flex: 1; min-width: 0; display: flex; flex-direction: column; }
.tabs { display: flex; height: 24px; flex: none; }
.tab { display: flex; align-items: center; gap: 4px; padding: 0 7px 0 4px; border: 1px solid #000; border-left-width: 0; border-bottom-color: #646464; border-radius: 4px 4px 0 0; background: #c8c8c8; white-space: nowrap; }
.tab > span { padding-top: 1px; }
.tab > svg:last-child:not(:first-child) { margin-left: auto; }
.tab:first-child { border-left-width: 1px; }
.tab.on { background: #e1e1e1; border-bottom-color: #e1e1e1; }
.tab-rest { flex: 1; border-bottom: 1px solid #000; }
.t1 { width: 141px; padding-left: 3px; } .t2 { width: 136px; } .t3 { width: 129px; padding-left: 3px; } .t4 { width: 166px; padding-left: 3px; }
.viewer-body { flex: 1; display: flex; flex-direction: column; min-height: 0; padding: 3px 3px 2px; border: 1px solid #000; border-top: 0; border-radius: 0 0 2px 2px; }
.bars { display: flex; flex-direction: column; gap: 3px; }
.bar-row { display: flex; gap: 3px; }
.bar { height: 32px; display: flex; align-items: center; gap: 3px; padding: 0 6px; border: 1px solid #000; border-radius: 2px; }
.bar > label, .bar > span { padding-top: 1px; }
.bar > label:first-child { margin-right: -1px; }
.w-channels { width: 112px; } .w-mip { width: 104px; } .w-slice { width: 79px; } .w-zoom { width: 70px; } .w-overlay { width: 173px; }
.toggles { display: flex; align-items: center; gap: 2px; }
.toggle { width: 25px; height: 24px; padding: 0; display: grid; place-items: center; border: 1px solid #000; background: #c3c9d5; }
.toggle.dim { color: #a0a0a0; }
.letter { width: 27px; justify-content: center; }
.wheel { width: 23px; justify-content: center; }
.actions { gap: 10px; padding-right: 10px; }
.actions span { margin-right: -4px; }
.zoom { gap: 12px; padding-right: 10px; }
.fit { gap: 4px; margin-left: 3px; }
.zoom .w-zoom { margin-left: 2px; }
.zoom > button:last-child { margin-left: -6px; }
input { width: 125px; height: 19px; padding: 0 3px; border: 1px solid #000; border-radius: 2px; background: #fff; }
.slider { position: relative; width: 192px; height: 18px; margin: 0 4px 0 5px; border: 1px solid #000; background: #7687a0; }
.low { position: absolute; left: -5px; top: -5px; }
.high { position: absolute; right: -5px; bottom: -4px; }
.range-tools { display: flex; gap: 11px; padding: 0 5px 0 4px; }
.output { flex: 1; min-height: 0; display: flex; gap: 5px; margin-top: 3px; }
.texture { flex: 1; display: flex; flex-direction: column; min-width: 0; }
.cur { width: 259px; padding-left: 3px; }
.texture-body { flex: 1; border: 1px solid #000; border-top: 0; border-radius: 0 0 2px 2px; display: flex; flex-direction: column; }
.texture-grid { flex: 1; display: grid; grid-template: 1fr 14px / 1fr 14px; }
.checkers, .pixel-checkers { background: repeating-conic-gradient(#969696 0 25%, #e1e1e1 0 50%) 0 0 / 128px 128px; }
.image { width: 515px; height: 100%; background: #000; }
.grey { background: #c8c8c8; }
.hscroll.grey { height: 14px; padding: 0; }
.info { height: 15px; display: flex; align-items: center; gap: 10px; }
.info pre { font: 12px/15px "DejaVu Sans Mono", monospace; }
.swatch { width: 32px; height: 14px; margin-left: -6px; background: #000; }
.right-col { width: 199px; flex: none; display: flex; flex-direction: column; }
.io { width: 83px; padding: 2px 3px 0; }
.io:first-child { width: 84px; }
.thumbs { flex: 1; padding: 6px; border: 1px solid #000; border-top: 0; border-radius: 0 0 2px 2px; }
.thumb { border: 4px solid #f00; border-radius: 3px; }
.thumb-img { height: 116px; background: #000; }
figcaption { height: 17px; display: grid; grid-template-columns: 67px 1fr; padding: 2px 1px 0; background: #646464; }
.pixel { height: 129px; margin-top: 5px; display: flex; flex-direction: column; border: 1px solid #000; border-top: 0; border-radius: 0 0 2px 2px; }
.pixel-checkers { flex: 1; }
.pixel-buttons { height: 25px; display: flex; justify-content: space-between; padding: 0 15px 0 14px; }
.push { height: 24px; display: flex; align-items: center; gap: 1px; padding: 0 5px 0 3px; border: 1px solid #000; border-right-width: 2px; border-bottom-width: 2px; border-radius: 2px; background: #e1e1e1; }
.push:disabled { color: #a0a0a0; border-color: #969696; background: #c8c8c8; }
.status { height: 29px; display: flex; align-items: center; gap: 18px; padding: 1px 6px 0; }
.status span { display: flex; align-items: center; gap: 4px; }
.status .context { color: #a0a0a0; }
.status .loaded { gap: 6px; }
```
